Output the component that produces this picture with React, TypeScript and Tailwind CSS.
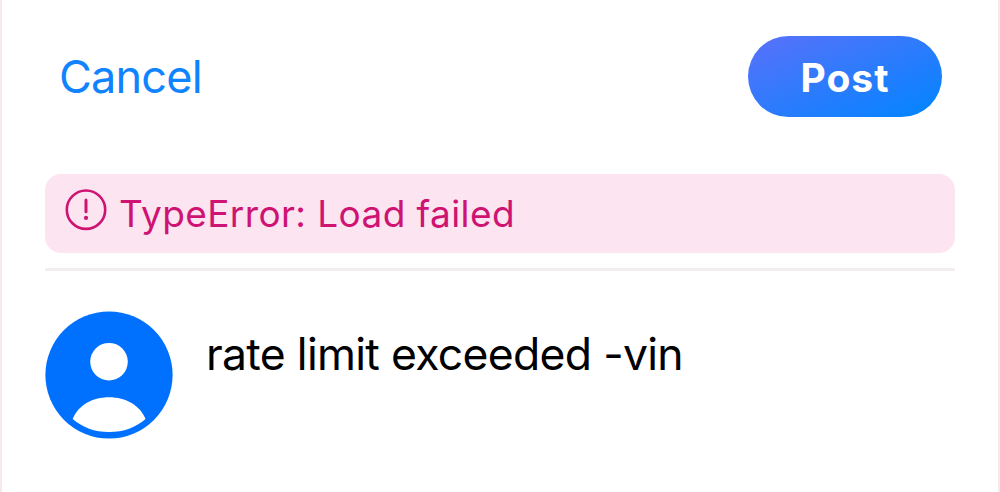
import React from 'react';

const ErrorIcon: React.FC = () => (
  <svg className="w-[42px] h-[42px] shrink-0" viewBox="0 0 42 42" fill="none">
    <circle cx="21" cy="20.7" r="19.2" stroke="currentColor" strokeWidth="2.6" />
    <path d="M21 11v11.8" stroke="currentColor" strokeWidth="3" strokeLinecap="round" />
    <circle cx="21" cy="28.9" r="2.1" fill="currentColor" />
  </svg>
);

const Avatar: React.FC = () => (
  <svg className="w-32 h-32 shrink-0" viewBox="0 0 128 128">
    <circle cx="64" cy="64" r="63.6" fill="#0070ff" />
    <circle cx="64" cy="50.7" r="18.8" fill="#fff" />
    <path d="M27.700 108C33 94.500 47 86.300 64 86.300S95 94.500 100.500 108C91 116.500 78.500 121 64 121S37.500 116.500 27.700 108Z" fill="#fff" />
  </svg>
);

const App: React.FC = () => {
  return (
    <div className="h-[492px] w-full overflow-hidden border-x-2 border-[#f8e8ed] bg-white px-[43px] font-['Inter',sans-serif]">
      {/* Header */}
      <div className="flex items-center justify-between pt-9 pl-3.5 pr-[13px]">
        <button className="h-[81px] text-[45px] leading-[82px] tracking-[-0.8px] text-[#1083fe] whitespace-nowrap">
          Cancel
        </button>
        <button className="h-[81px] w-[194px] rounded-full bg-[linear-gradient(to_bottom_right,#5a71fa_0%,#0085ff_100%)] text-[39px] font-bold leading-[84px] tracking-[1px] text-white">
          Post
        </button>
      </div>

      {/* Error banner */}
      <div className="mt-[57px] flex h-[79px] items-center rounded-2xl bg-[#fce4f1] pl-5 text-[#ce1372]">
        <div className="mb-[7px]">
          <ErrorIcon />
        </div>
        <span className="ml-3 text-[37px] leading-[80px] tracking-[0.4px] whitespace-nowrap">TypeError: Load failed</span>
      </div>

      <div className="mt-[15px] h-[3px] bg-[#f3ecf0]" />

      {/* Composer */}
      <div className="mt-10 flex">
        <Avatar />
        <p className="ml-[33px] mt-3 text-[44.5px] leading-[62px] tracking-[-0.7px] text-black whitespace-nowrap">
          rate limit exceeded -vin
        </p>
      </div>
    </div>
  );
};

export default App;
